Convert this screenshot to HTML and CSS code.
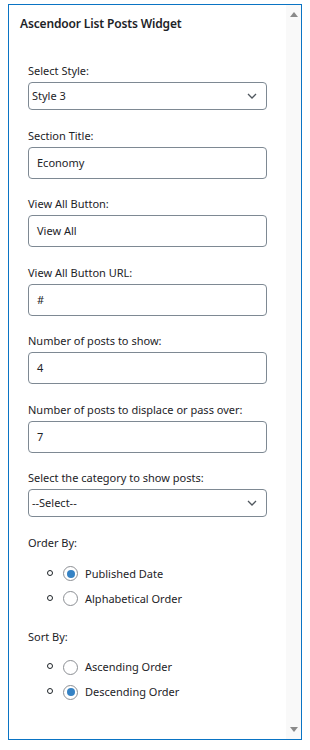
FILE: index.html
```html
<!DOCTYPE html>
<html lang="en">
<head>
    <meta charset="UTF-8">
    <meta name="viewport" content="width=device-width, initial-scale=1.0">
    <title>Ascendoor List Posts Widget</title>
    <link rel="stylesheet" href="styles.css">
</head>
<body>
    <div class="widget-frame">
        <div class="widget-body">
            <h3 class="widget-title">Ascendoor List Posts Widget</h3>

            <div class="widget-fields">
                <div class="field">
                    <label>Select Style:</label>
                    <div class="select-box">
                        <span>Style 3</span>
                        <svg class="chevron" width="10" height="6" viewBox="0 0 10 6"><path d="M1 1l4 4 4-4" fill="none" stroke="#50575e" stroke-width="1.3"/></svg>
                    </div>
                </div>

                <div class="field">
                    <label>Section Title:</label>
                    <div class="text-input">Economy</div>
                </div>

                <div class="field">
                    <label>View All Button:</label>
                    <div class="text-input">View All</div>
                </div>

                <div class="field">
                    <label>View All Button URL:</label>
                    <div class="text-input">#</div>
                </div>

                <div class="field">
                    <label>Number of posts to show:</label>
                    <div class="text-input">4</div>
                </div>

                <div class="field">
                    <label>Number of posts to displace or pass over:</label>
                    <div class="text-input">7</div>
                </div>

                <div class="field">
                    <label>Select the category to show posts:</label>
                    <div class="select-box">
                        <span>--Select--</span>
                        <svg class="chevron" width="10" height="6" viewBox="0 0 10 6"><path d="M1 1l4 4 4-4" fill="none" stroke="#50575e" stroke-width="1.3"/></svg>
                    </div>
                </div>

                <!-- Order By -->
                <div class="field radio-field order-field">
                    <label>Order By:</label>
                    <ul class="radio-list">
                        <li class="radio-row"><span class="bullet"></span><span class="radio checked"></span>Published Date</li>
                        <li class="radio-row"><span class="bullet"></span><span class="radio"></span>Alphabetical Order</li>
                    </ul>
                </div>

                <!-- Sort By -->
                <div class="field radio-field">
                    <label>Sort By:</label>
                    <ul class="radio-list">
                        <li class="radio-row"><span class="bullet"></span><span class="radio"></span>Ascending Order</li>
                        <li class="radio-row"><span class="bullet"></span><span class="radio checked"></span>Descending Order</li>
                    </ul>
                </div>
            </div>
        </div>

        <div class="scrollbar">
            <span class="arrow arrow-up"></span>
            <span class="arrow arrow-down"></span>
        </div>
    </div>
</body>
</html>
```

FILE: styles.css
```css
* {
    margin: 0;
    padding: 0;
    box-sizing: border-box;
}

body {
    font-family: 'Noto Sans', sans-serif;
    font-size: 11px;
    line-height: 16px;
    color: #1d2327;
    background: #ffffff;
}

.widget-frame {
    margin: 4px 8px 0 8px;
    width: 294px;
    height: 736px;
    border: 1px solid #0a74c4;
    display: flex;
}

.widget-body {
    flex: 1;
    padding: 11px 0 0 11px;
}

.widget-title {
    font-size: 12px;
    font-weight: 600;
    line-height: 16px;
    letter-spacing: -0.15px;
}

.widget-fields {
    padding: 31px 0 0 8px;
    width: 247px;
}

.field {
    display: flex;
    flex-direction: column;
    gap: 3px;
    margin-bottom: 17.5px;
}

.field label {
    display: block;
}

.text-input,
.select-box {
    width: 239px;
    border: 1px solid #7e8993;
    border-radius: 4px;
    display: flex;
    align-items: center;
}

.text-input {
    height: 32px;
    padding: 0 8px;
}

.select-box {
    height: 28px;
    padding: 0 9px 0 3px;
    justify-content: space-between;
}

.radio-field {
    gap: 10px;
}

.order-field {
    gap: 11px;
    margin-bottom: 18.5px;
}

.radio-list {
    list-style: none;
    display: flex;
    flex-direction: column;
    gap: 1px;
}

.radio-row {
    height: 24px;
    display: flex;
    align-items: center;
    padding-left: 19px;
}

.bullet {
    width: 6px;
    height: 6px;
    border: 1px solid #1d2327;
    border-radius: 50%;
    margin-right: 10px;
    margin-top: -2px;
}

.radio {
    width: 15px;
    height: 15px;
    border: 1px solid #8c8f94;
    border-radius: 50%;
    margin-right: 7px;
    display: flex;
    align-items: center;
    justify-content: center;
}

.radio.checked::before {
    content: '';
    width: 8px;
    height: 8px;
    border-radius: 50%;
    background: #3582c4;
}

.scrollbar {
    width: 15px;
    background: #f9f9f9;
    display: flex;
    flex-direction: column;
    justify-content: space-between;
    align-items: center;
    padding: 7px 0 7px;
}

.arrow {
    width: 0;
    height: 0;
    border-left: 4px solid transparent;
    border-right: 4px solid transparent;
}

.arrow-up {
    border-bottom: 5px solid #8a8a8a;
}

.arrow-down {
    border-top: 5px solid #8a8a8a;
}
```
